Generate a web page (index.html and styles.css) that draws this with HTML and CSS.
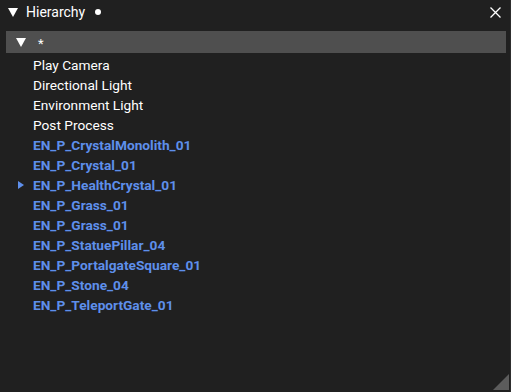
FILE: index.html
```html
<!DOCTYPE html>
<html>
<head>
<meta name="viewport" content="width=device-width, initial-scale=1">
<link rel="stylesheet" href="styles.css">
</head>
<body>

<div class="window">
  <div class="titlebar">
    <span class="tri tri-title"></span>
    <span class="title">Hierarchy</span>
    <span class="dot"></span>
    <span class="spacer"></span>
    <svg class="close" width="11" height="11" viewBox="0 0 11 11">
      <path d="M0.5 0.5 L10.5 10.5 M10.5 0.5 L0.5 10.5" stroke="#fff" stroke-width="1.3"/>
    </svg>
  </div>

  <div class="content">
    <div class="root">
      <span class="tri tri-root"></span>
      <span class="star">*</span>
    </div>

    <ul class="tree">
      <li>Play Camera</li>
      <li>Directional Light</li>
      <li>Environment Light</li>
      <li>Post Process</li>
      <li class="entity">EN_P_CrystalMonolith_01</li>
      <li class="entity">EN_P_Crystal_01</li>
      <li class="entity has-children">EN_P_HealthCrystal_01</li>
      <li class="entity">EN_P_Grass_01</li>
      <li class="entity">EN_P_Grass_01</li>
      <li class="entity">EN_P_StatuePillar_04</li>
      <li class="entity">EN_P_PortalgateSquare_01</li>
      <li class="entity">EN_P_Stone_04</li>
      <li class="entity">EN_P_TeleportGate_01</li>
    </ul>
  </div>

  <div class="grip"></div>
</div>

</body>
</html>
```

FILE: styles.css
```css
* {
  box-sizing: border-box;
}

body {
  margin: 0;
  background: #202020;
  font-family: Roboto, "Liberation Sans", sans-serif;
  font-size: 13.7px;
  color: #fff;
}

/* The whole panel */
.window {
  position: relative;
  width: 511px;
  height: 392px;
  background: #202020;
  border-right: 1px solid #2e2e2e;
}

/* Title bar */
.titlebar {
  display: flex;
  align-items: center;
  height: 24px;
  padding: 0 8px 0 8px;
}

.title {
  margin-left: 8px;
  font-size: 14px;
}

.dot {
  width: 6px;
  height: 6px;
  border-radius: 50%;
  background: #fff;
  margin-left: 10px;
}

.spacer {
  flex: 1;
}

.close {
  margin-right: 1px;
}

/* Triangles drawn with borders */
.tri {
  width: 0;
  height: 0;
  border-left: 5px solid transparent;
  border-right: 5px solid transparent;
  border-top: 9px solid #fff;
}

/* Content */
.content {
  padding: 7px 4px 0 6px;
}

.root {
  display: flex;
  align-items: center;
  height: 22px;
  background: #4f4f4f;
  padding-left: 10px;
}

.star {
  margin-left: 12px;
  font-size: 13px;
  line-height: 13px;
  margin-top: 2px;
}

ul.tree {
  margin: 2px 0 0 0;
  padding: 0;
}

ul.tree li {
  position: relative;
  list-style-type: none;
  height: 20px;
  line-height: 20px;
  padding-left: 27px;
  color: #fff;
}

ul.tree li.entity {
  color: #5e8feb;
  font-weight: bold;
}

/* Small expander arrow for items with children */
ul.tree li.has-children::before {
  content: '';
  position: absolute;
  left: 12px;
  top: 6px;
  border-top: 4px solid transparent;
  border-bottom: 4px solid transparent;
  border-left: 6px solid #5e8feb;
}

/* Resize grip in the bottom right corner */
.grip {
  position: absolute;
  right: 1px;
  bottom: 2px;
  width: 0;
  height: 0;
  border-left: 16px solid transparent;
  border-bottom: 16px solid #5c5c5c;
}
```
